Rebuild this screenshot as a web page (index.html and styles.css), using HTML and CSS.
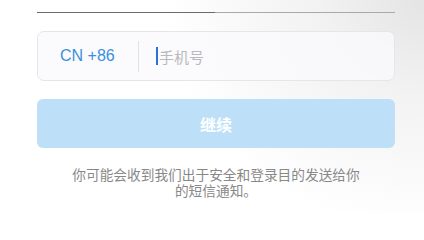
FILE: index.html
```html
<!DOCTYPE html>
<html lang="zh">
<head>
<meta charset="utf-8">
<link rel="stylesheet" href="styles.css">
</head>
<body>
<div class="page">
  <div class="progress"><div class="progress-fill"></div></div>
  <div class="phone-field">
    <span class="country">CN +86</span>
    <span class="divider"></span>
    <span class="caret"></span>
    <span class="placeholder">手机号</span>
  </div>
  <button class="continue">继续</button>
  <p class="notice">你可能会收到我们出于安全和登录目的发送给你的短信通知。</p>
</div>
</body>
</html>
```

FILE: styles.css
```css
html, body {
  margin: 0;
  padding: 0;
  width: 424px;
  height: 212px;
  overflow: hidden;
}
html {
  background: #ffffff radial-gradient(ellipse 260px 230px at 424px 0px, #e4e4e4 0%, #f2f2f2 40%, #ffffff 100%) no-repeat;
}
body {
  font-family: "Liberation Sans", "Noto Sans CJK SC", sans-serif;
}
.page {
  padding: 12px 29px 0 37px;
  display: flex;
  flex-direction: column;
}
.progress {
  height: 1px;
  width: 358px;
  background: #a9a9a9;
  display: flex;
}
.progress-fill {
  width: 178px;
  background: #6b6b6b;
}
.phone-field {
  margin-top: 18px;
  box-sizing: border-box;
  width: 358px;
  height: 50px;
  border: 1px solid #e6e6ea;
  border-radius: 7px;
  background: rgba(250, 250, 252, 0.8);
  display: flex;
  align-items: center;
}
.country {
  margin-left: 22px;
  width: 56px;
  font-size: 16px;
  color: #3a8fdf;
}
.divider {
  margin-left: 22px;
  width: 1px;
  height: 31px;
  background: #e2e2e4;
}
.caret {
  margin-left: 17px;
  width: 2px;
  height: 18px;
  background: #2f6fd8;
}
.placeholder {
  margin-left: 1px;
  font-size: 15px;
  color: #b9b9bc;
  font-family: "Noto Sans CJK SC", sans-serif;
}
.continue {
  margin-top: 18px;
  width: 358px;
  height: 49px;
  border: none;
  border-radius: 6px;
  background: #bde0f8;
  color: #ffffff;
  font-size: 16px;
  font-weight: bold;
  font-family: "Noto Sans CJK SC", sans-serif;
  padding: 0;
}
.notice {
  margin: 18px auto 0;
  width: 292px;
  text-align: center;
  font-size: 13.7px;
  line-height: 16px;
  color: #888888;
  font-family: "Noto Sans CJK SC", sans-serif;
}
```
